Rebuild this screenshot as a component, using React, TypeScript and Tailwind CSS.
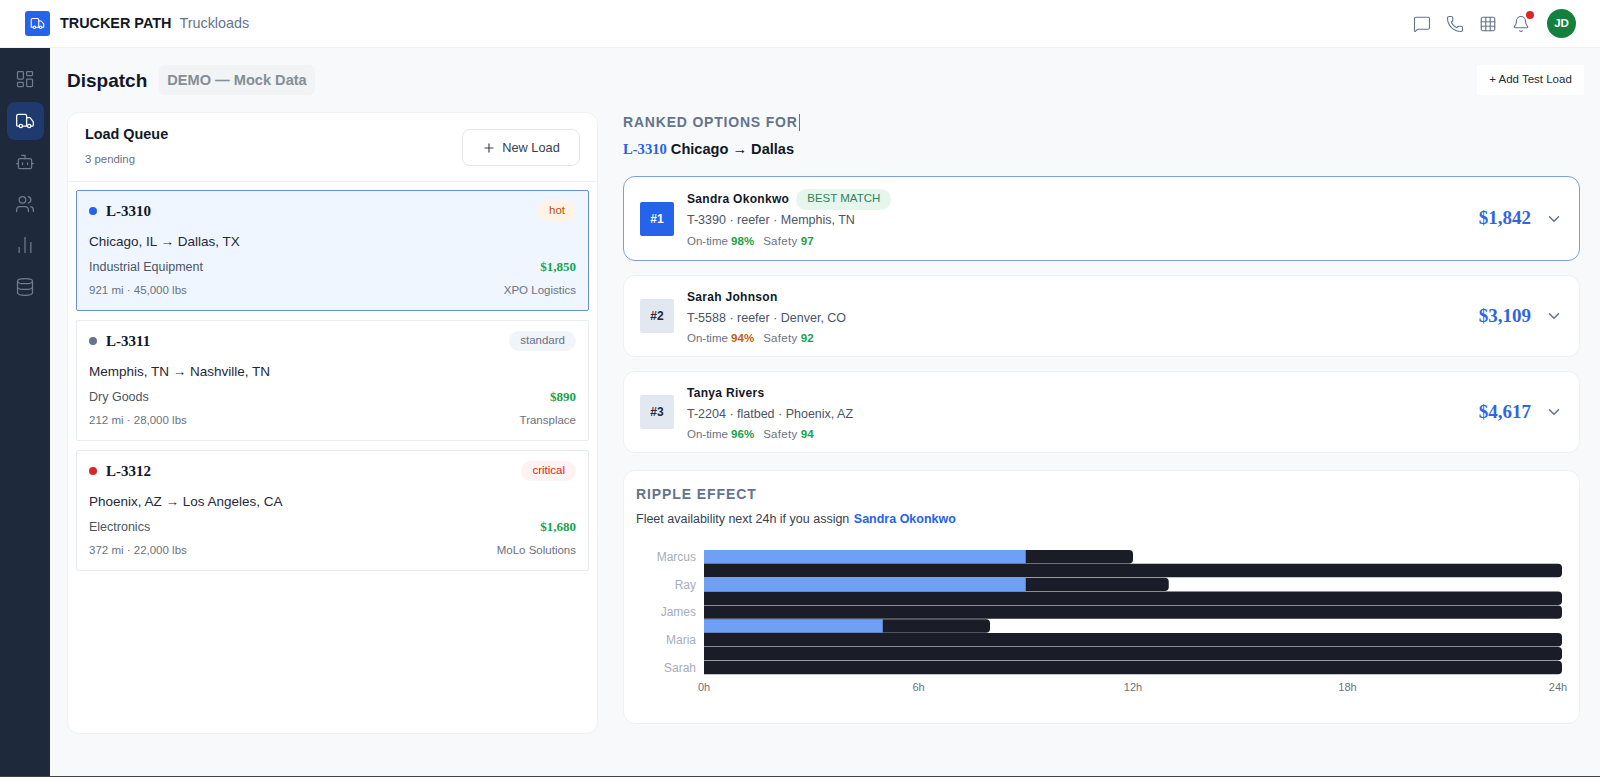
import React from "react";
import {
  Truck,
  LayoutDashboard,
  Bot,
  Users,
  ChartNoAxesColumn,
  Database,
  MessageSquare,
  Phone,
  Grid3x3,
  Bell,
  Plus,
  ChevronDown,
} from "lucide-react";

const loads = [
  {
    id: "L-3310",
    dot: "bg-[#2563eb]",
    tag: "hot",
    tagClass: "bg-[#fff3e6] text-[#b45309]",
    route: "Chicago, IL → Dallas, TX",
    cargo: "Industrial Equipment",
    price: "$1,850",
    meta: "921 mi · 45,000 lbs",
    broker: "XPO Logistics",
    active: true,
  },
  {
    id: "L-3311",
    dot: "bg-[#64748b]",
    tag: "standard",
    tagClass: "bg-[#f1f5f9] text-[#64748b]",
    route: "Memphis, TN → Nashville, TN",
    cargo: "Dry Goods",
    price: "$890",
    meta: "212 mi · 28,000 lbs",
    broker: "Transplace",
    active: false,
  },
  {
    id: "L-3312",
    dot: "bg-[#dc2626]",
    tag: "critical",
    tagClass: "bg-[#fef2f2] text-[#dc2626]",
    route: "Phoenix, AZ → Los Angeles, CA",
    cargo: "Electronics",
    price: "$1,680",
    meta: "372 mi · 22,000 lbs",
    broker: "MoLo Solutions",
    active: false,
  },
];

const options = [
  { rank: "#1", name: "Sandra Okonkwo", detail: "T-3390 · reefer · Memphis, TN", onTime: "98%", onTimeClass: "text-[#16a34a]", safety: "97", price: "$1,842", best: true },
  { rank: "#2", name: "Sarah Johnson", detail: "T-5588 · reefer · Denver, CO", onTime: "94%", onTimeClass: "text-[#c2610c]", safety: "92", price: "$3,109", best: false },
  { rank: "#3", name: "Tanya Rivers", detail: "T-2204 · flatbed · Phoenix, AZ", onTime: "96%", onTimeClass: "text-[#16a34a]", safety: "94", price: "$4,617", best: false },
];

// hours: [blue part, dark part]
const rows = [
  { label: "Marcus", blue: 9, total: 12 },
  { label: "", blue: 0, total: 24 },
  { label: "Ray", blue: 9, total: 13 },
  { label: "", blue: 0, total: 24 },
  { label: "James", blue: 0, total: 24 },
  { label: "", blue: 5, total: 8 },
  { label: "Maria", blue: 0, total: 24 },
  { label: "", blue: 0, total: 24 },
  { label: "Sarah", blue: 0, total: 24 },
];

function RippleChart() {
  const x0 = 68;
  const hour = 35.75;
  const top = 4;
  const step = 13.85;
  return (
    <svg width="932" height="158" className="block">
      {rows.map((r, i) => {
        const y = top + i * step;
        return (
          <g key={i}>
            <path
              d={`M${x0} ${y}H${x0 + r.total * hour - 4}a4 4 0 0 1 4 4V${y + 9.4}a4 4 0 0 1 -4 4H${x0}Z`}
              fill="#1a1d27"
            />
            {r.blue > 0 && <rect x={x0} y={y} width={r.blue * hour} height={13.4} fill="#6ea1f5" />}
            {r.label && (
              <text x={x0 - 8} y={y + 11} textAnchor="end" fontSize="12" fill="#a5adbd" fontFamily="'Liberation Sans', sans-serif">
                {r.label}
              </text>
            )}
          </g>
        );
      })}
      {[0, 6, 12, 18, 24].map((h) => (
        <text
          key={h}
          x={h === 24 ? x0 + h * hour - 4 : x0 + h * hour}
          y={145}
          textAnchor="middle"
          fontSize="11"
          fill="#6b7280"
          fontFamily="'Liberation Sans', sans-serif"
        >
          {h}h
        </text>
      ))}
    </svg>
  );
}

export default function App() {
  return (
    <div className="h-[777px] flex flex-col bg-[#f8f9fb] font-['Liberation_Sans',sans-serif] overflow-hidden border-b border-[#444]">
      <header className="h-12 shrink-0 bg-white border-b border-[#eef0f3] flex items-center pl-[25px] pr-[24px]">
        <div className="w-[25px] h-[25px] rounded-[3px] bg-[#2563eb] flex items-center justify-center">
          <Truck size={15} strokeWidth={1.75} className="text-white" />
        </div>
        <span className="ml-[10px] text-[14.4px] font-bold text-[#111827]">TRUCKER PATH</span>
        <span className="ml-2 text-[14.4px] text-[#64748b]">Truckloads</span>
        <div className="ml-auto flex items-center">
          <MessageSquare size={18} strokeWidth={1.5} className="text-[#64748b]" />
          <Phone size={18} strokeWidth={1.5} className="ml-[15px] text-[#64748b]" />
          <Grid3x3 size={18} strokeWidth={1.5} className="ml-[15px] text-[#64748b]" />
          <div className="relative ml-[15px]">
            <Bell size={18} strokeWidth={1.5} className="text-[#64748b]" />
            <span className="absolute -top-[4px] -right-[4px] w-2 h-2 rounded-full bg-[#dc2626]" />
          </div>
          <div className="ml-[17px] w-[29px] h-[29px] rounded-full bg-[#15803d] text-white text-[11.5px] font-bold flex items-center justify-center">
            JD
          </div>
        </div>
      </header>

      <div className="flex-1 flex min-h-0">
        <aside className="w-[50px] shrink-0 bg-[#1e293b] flex flex-col items-center pt-[12px] gap-[3.6px]">
          {[LayoutDashboard, Truck, Bot, Users, ChartNoAxesColumn, Database].map((Icon, i) => (
            <div
              key={i}
              className={`w-[37px] h-[38px] rounded-lg flex items-center justify-center ${i === 1 ? "bg-[#1e3a6e] text-white" : "text-[#6f7d90]"}`}
            >
              <Icon size={20} strokeWidth={1.5} />
            </div>
          ))}
        </aside>

        <main className="flex-1 min-w-0 pl-[17px] pr-5 pt-[17px]">
          <div className="flex items-center h-[30px]">
            <h1 className="text-[19px] leading-none font-bold text-[#111827]">Dispatch</h1>
            <span className="ml-3 h-[30px] pt-px px-2 rounded-md bg-[#f1f3f5] text-[#868e96] text-[14.6px] font-bold flex items-center">
              DEMO — Mock Data
            </span>
            <button className="ml-auto -mr-1 h-[30px] w-[107px] bg-white text-[#1f2937] text-[11.5px] flex items-center justify-center">
              + Add Test Load
            </button>
          </div>

          <div className="flex mt-[17px] gap-[25px]">
            <section className="w-[531px] shrink-0 h-[622px] bg-white rounded-xl border border-[#eef0f3]">
              <div className="h-[69px] border-b border-[#eef0f3] pl-[17px] pr-[17px] flex justify-between">
                <div>
                  <div className="mt-[11px] text-[14.4px] leading-[20px] font-bold text-[#111827]">Load Queue</div>
                  <div className="mt-[7px] text-[11.4px] leading-[16px] text-[#6b7280]">3 pending</div>
                </div>
                <button className="mt-4 w-[118px] h-[37px] rounded-lg border border-[#e5e7eb] bg-white text-[12.8px] text-[#374151] flex items-center justify-center gap-[6px]">
                  <Plus size={14} />
                  New Load
                </button>
              </div>
              <div className="px-2 pt-2 flex flex-col gap-[9px]">
                {loads.map((l) => (
                  <div
                    key={l.id}
                    className={`h-[121px] rounded-[2px] border px-3 pt-[10px] ${l.active ? "bg-[#eff6ff] border-[#6b8fd6]" : "bg-white border-[#e9ecef]"}`}
                  >
                    <div className="flex items-center justify-between h-[20px]">
                      <div className="flex items-center">
                        <span className={`w-2 h-2 rounded-full ${l.dot}`} />
                        <span className="ml-[9px] font-['Liberation_Serif',serif] text-[15px] font-bold text-[#111827]">{l.id}</span>
                      </div>
                      <span className={`h-[20px] px-[11px] rounded-full text-[11.5px] leading-[18px] ${l.tagClass}`}>{l.tag}</span>
                    </div>
                    <div className="mt-[11px] text-[13.5px] leading-[20px] text-[#1f2937]">{l.route}</div>
                    <div className="mt-[5px] flex justify-between items-center text-[12.5px] leading-[20px] text-[#4b5563]">
                      <span>{l.cargo}</span>
                      <span className="font-['Liberation_Serif',serif] text-[13px] font-bold text-[#16a34a]">{l.price}</span>
                    </div>
                    <div className="mt-[5px] flex justify-between text-[11.5px] leading-[16px] text-[#6b7280]">
                      <span>{l.meta}</span>
                      <span>{l.broker}</span>
                    </div>
                  </div>
                ))}
              </div>
            </section>

            <section className="flex-1 min-w-0">
              <div className="flex items-center h-5 text-[14px] font-bold tracking-[0.8px] text-[#64748b]">
                RANKED OPTIONS FOR
                <span className="ml-[1px] w-px h-[17px] bg-[#64748b]" />
              </div>
              <div className="mt-[7px] text-[14.6px] leading-[20px] font-bold text-[#111827]">
                <span className="font-['Liberation_Serif',serif] font-bold text-[#2563eb]">L-3310</span> Chicago → Dallas
              </div>
              <div className="mt-[17px] flex flex-col gap-[14px]">
                {options.map((o) => (
                  <div
                    key={o.rank}
                    className={`flex items-center bg-white rounded-xl border pl-4 pr-4 ${o.best ? "h-[85px] border-[#7a9fe6]" : "h-[82px] border-[#eef0f3]"}`}
                  >
                    <div className={`w-[34px] h-[34px] rounded-[2px] flex items-center justify-center text-[12px] font-bold ${o.best ? "bg-[#2563eb] text-white" : "bg-[#e2e8f0] text-[#1f2937]"}`}>
                      {o.rank}
                    </div>
                    <div className="ml-[13px]">
                      <div className="flex items-center h-[21px]">
                        <span className="text-[12px] font-bold text-[#111827] tracking-[0.3px]">{o.name}</span>
                        {o.best && (
                          <span className="ml-[7px] h-[21px] px-[11px] rounded-full bg-[#e6f6ec] text-[#2f855a] text-[11.5px] flex items-center">BEST MATCH</span>
                        )}
                      </div>
                      <div className="text-[12.5px] leading-[20px] text-[#4b5563]">{o.detail}</div>
                      <div className={`text-[11.5px] leading-[16px] text-[#6b7280] ${o.best ? "mt-[3px]" : "mt-[2px]"}`}>
                        On-time <span className={`font-bold ${o.onTimeClass}`}>{o.onTime}</span>
                        <span className="ml-[9px] tracking-[0.3px]">Safety</span> <span className="font-bold text-[#16a34a]">{o.safety}</span>
                      </div>
                    </div>
                    <div className="ml-auto flex items-center">
                      <span className="font-['Liberation_Serif',serif] text-[19px] font-bold text-[#2f66e0]">{o.price}</span>
                      <ChevronDown size={18} className="ml-[14px] text-[#64748b]" />
                    </div>
                  </div>
                ))}
              </div>
              <div className="mt-[17px] h-[254px] bg-white rounded-xl border border-[#eef0f3] pl-3 pr-2 pt-[13px]">
                <div className="text-[14px] leading-[20px] font-bold tracking-[0.9px] text-[#64748b]">RIPPLE EFFECT</div>
                <div className="mt-[5px] text-[12.5px] leading-[20px] text-[#374151]">
                  Fleet availability next 24h if you assign <span className="ml-[1px] font-bold text-[#2563eb]">Sandra Okonkwo</span>
                </div>
                <div className="mt-[17px]">
                  <RippleChart />
                </div>
              </div>
            </section>
          </div>
        </main>
      </div>
    </div>
  );
}
